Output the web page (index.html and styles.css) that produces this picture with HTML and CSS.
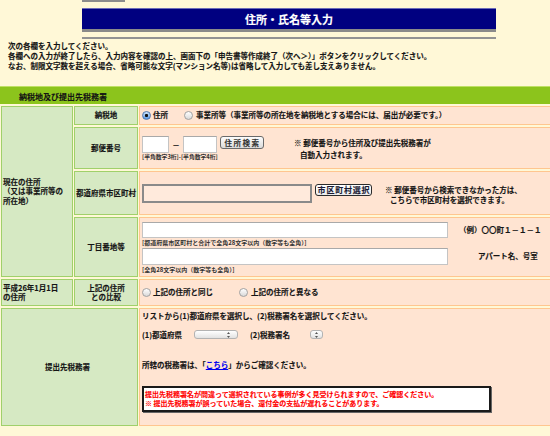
FILE: index.html
```html
<!DOCTYPE html>
<html lang="ja">
<head>
<meta charset="utf-8">
<title>住所・氏名等入力</title>
<link rel="stylesheet" href="styles.css">
</head>
<body>
<div class="toprule"></div>
<div class="titlebox">
  <h1 class="title">住所・氏名等入力</h1>
  <div class="titleline"></div>
</div>
<div class="intro">
  <p>次の各欄を入力してください。</p>
  <p>各欄への入力が終了したら、入力内容を確認の上、画面下の「申告書等作成終了（次へ＞）」ボタンをクリックしてください。</p>
  <p>なお、制限文字数を超える場合、省略可能な文字(マンション名等)は省略して入力しても差し支えありません。</p>
</div>
<div class="sechead">納税地及び提出先税務署</div>
<div class="form">
  <div class="g addr">現在の住所<br>（又は事業所等の<br>所在地）</div>
  <div class="g lbl">納税地</div>
  <div class="p radios">
    <span class="radio on"></span><span class="rl">住所</span>
    <span class="radio r2a"></span><span class="rl rl2">事業所等（事業所等の所在地を納税地とする場合には、届出が必要です。）</span>
  </div>

  <div class="g lbl">郵便番号</div>
  <div class="p zip">
    <div class="zipleft">
      <div class="ziprow">
        <span class="inp z1"></span><span class="dash">－</span><span class="inp z2"></span><span class="btn b1">住所検索</span>
      </div>
      <div class="tiny">[半角数字3桁]-[半角数字4桁]</div>
    </div>
    <div class="note n1">※ 郵便番号から住所及び提出先税務署が<span class="n2">自動入力されます。</span></div>
  </div>

  <div class="g lbl">都道府県市区町村</div>
  <div class="p city">
    <span class="cityin"></span><span class="btn b2">市区町村選択</span>
    <div class="note n3">※ 郵便番号から検索できなかった方は、<span class="n4">こちらで市区町村を選択できます。</span></div>
  </div>

  <div class="g lbl">丁目番地等</div>
  <div class="p street">
    <div class="sline"><span class="inp s1"></span><span class="ex ex1">（例）〇〇町１－１－１</span></div>
    <div class="tiny t2">[都道府県市区町村と合計で全角28文字以内（数字等も全角）]</div>
    <div class="sline l2"><span class="inp s2"></span><span class="ex ex2">アパート名、号室</span></div>
    <div class="tiny t2">[全角28文字以内（数字等も全角）]</div>
  </div>

  <div class="g h26">平成26年1月1日<br>の住所</div>
  <div class="g lbl">上記の住所<br>との比較</div>
  <div class="p radios">
    <span class="radio"></span><span class="rl">上記の住所と同じ</span>
    <span class="radio r2b"></span><span class="rl rl2">上記の住所と異なる</span>
  </div>

  <div class="g office">提出先税務署</div>
  <div class="p sel-cell">
    <p class="l1">リストから(1)都道府県を選択し、(2)税務署名を選択してください。</p>
    <div class="selrow">
      <span class="sl1">(1)都道府県</span>
      <span class="sel s-a"><svg width="3" height="6" viewBox="0 0 3 6"><path d="M1.5 0L3 2H0z M1.5 6L3 4H0z" fill="#555"/></svg></span>
      <span class="sl2">(2)税務署名</span>
      <span class="sel s-b"><svg width="3" height="6" viewBox="0 0 3 6"><path d="M1.5 0L3 2H0z M1.5 6L3 4H0z" fill="#555"/></svg></span>
    </div>
    <p class="l3">所轄の税務署は、「<a class="link" href="#">こちら</a>」からご確認ください。</p>
    <div class="warn">
      <p>提出先税務署名が間違って選択されている事例が多く見受けられますので、ご確認ください。</p>
      <p>※ 提出先税務署が誤っていた場合、還付金の支払が遅れることがあります。</p>
    </div>
  </div>
</div>
</body>
</html>
```
FILE: styles.css
```css
* { box-sizing: border-box; margin: 0; padding: 0; }
html, body { width: 550px; height: 436px; overflow: hidden; }
body {
  background: #FFF8D7;
  font-family: "Noto Sans CJK JP", "Noto Sans", sans-serif;
  font-size: 7.5px;
  font-weight: 700;
  color: #141414;
  line-height: 10px;
  -webkit-text-stroke: 0.12px #141414;
}
.toprule { margin-left: 82px; width: 43px; height: 2px; background: #8c8c8c; }
.titlebox { margin: 6px 0 0 82px; width: 414px; }
.title {
  height: 24px;
  background: #000080;
  border-top: 1px solid #6b6bb8;
  border-bottom: 3px solid #8a8a8a;
  color: #fff;
  -webkit-text-stroke: 0.15px #fff;
  font-size: 11px;
  font-weight: 700;
  line-height: 20px;
  text-align: center;
}
.titleline { margin-top: 5px; height: 2px; background: #939393; }
.intro { margin-top: 2px; padding-left: 8px; line-height: 10.2px; }
.sechead {
  margin-top: 14px;
  height: 18px;
  background: #8CC41C;
  border-top: 1px solid #bfe064;
  padding: 2px 0 0 19px;
  font-size: 8px;
  line-height: 15px;
}
.form {
  margin-top: 2px;
  padding-left: 1px;
  width: 560px;
  display: grid;
  grid-template-columns: 72px 64px 1fr;
  grid-template-rows: 19px 42px 44px 60px 27px 118px;
  gap: 2px 1px;
}
.g { background: #D6E9C3; border: 1px solid #A0D06A; }
.p { background: #FFE4D2; border: 1px solid #FFC68F; padding-left: 2px; }
.addr { grid-row: 1 / 5; display: flex; align-items: center; padding-left: 1px; line-height: 9.5px; }
.lbl { display: flex; align-items: center; justify-content: center; text-align: center; line-height: 9.5px; }
.h26 { display: flex; align-items: center; padding-left: 1px; line-height: 9.5px; }
.office { grid-column: 1 / 3; display: flex; align-items: center; justify-content: center; padding-right: 4px; }

.radios { display: flex; align-items: center; }
.radio {
  flex: none;
  width: 9px; height: 9px;
  border-radius: 50%;
  border: 1px solid #a2a2a2;
  background: linear-gradient(#ffffff, #d9d9d9);
}
.radio.on {
  border-color: #4f78b0;
  background: radial-gradient(circle, #111 0 1.3px, transparent 1.8px), linear-gradient(#cfe3fa, #5b98e4);
}
.rl { margin-left: 2px; }
.r2a { margin-left: 16px; }
.r2b { margin-left: 26px; }
.rl2 { margin-left: 3px; }

.zip { display: flex; padding-top: 8px; }
.zipleft { width: 152px; flex: none; }
.ziprow { display: flex; align-items: flex-start; }
.inp { display: block; flex: none; background: #fff; border: 1px solid #c4c4c4; border-top-color: #a9a9a9; }
.z1 { width: 27px; height: 17px; }
.z2 { width: 34px; height: 17px; }
.dash { width: 14px; text-align: center; line-height: 17px; }
.btn {
  flex: none;
  display: block;
  text-align: center;
  border-radius: 3px;
}
.b1 {
  margin-left: 3px;
  width: 44px; height: 13px;
  border: 1px solid #6a6a6a;
  background: linear-gradient(#fdfdfd, #dadada);
  color: #333;
  -webkit-text-stroke: 0.1px #333;
  letter-spacing: 1.5px;
  line-height: 11px;
  padding-left: 1px;
}
.tiny { font-size: 5.8px; line-height: 8px; color: #333; -webkit-text-stroke: 0; white-space: nowrap; }
.note { line-height: 10px; }
.n1 { margin-top: 2px; }
.n2 { display: block; margin-top: 2px; padding-left: 6px; }

.city { display: flex; align-items: flex-start; padding-top: 12px; }
.cityin { flex: none; width: 170px; height: 19px; border: 2px solid #8a8a8a; background: #FFEADC; }
.b2 {
  margin-left: 3px;
  width: 57px; height: 12px;
  border: 1px solid #2b2b2b;
  background: linear-gradient(#ffffff, #ececec);
  color: #1b1b3a;
  font-size: 8px;
  letter-spacing: .8px;
  line-height: 10px;
  padding-left: 1px;
}
.n3 { margin: 1px 0 0 13px; line-height: 10px; }
.n4 { display: block; padding-left: 5px; }

.street { padding-top: 4px; }
.sline { display: flex; align-items: center; }
.s1 { width: 306px; height: 16px; }
.s2 { width: 306px; height: 17px; }
.t2 { font-size: 6px; margin-top: 1px; }
.l2 { margin-top: 1px; }
.ex1 { margin-left: 11px; }
.ex2 { margin-left: 30px; }

.sel-cell { line-height: 9px; }
.l1 { margin-top: 2px; }
.selrow { display: flex; align-items: center; margin-top: 10px; height: 10px; }
.sl1 { width: 52px; flex: none; }
.sl2 { margin-left: 12px; width: 60px; flex: none; }
.sel {
  flex: none;
  display: flex;
  align-items: center;
  justify-content: flex-end;
  height: 9px;
  border: 1px solid #b3b3b3;
  border-radius: 3px;
  background: linear-gradient(#ffffff, #e2e2e2);
}
.s-a { width: 44px; padding-right: 7px; }
.s-b { width: 13px; padding-right: 4px; }
.sel svg { display: block; }
.l3 { margin-top: 20px; }
.link { color: #0000EE; -webkit-text-stroke: 0.12px #0000EE; text-decoration: underline; }
.warn {
  margin-top: 17px;
  width: 349px;
  height: 26px;
  background: #fff;
  border: 2px solid #1a1a1a;
  box-shadow: 1px 1px 0 #666;
  color: #FF0000;
  -webkit-text-stroke: 0.12px #FF0000;
  font-size: 7px;
  line-height: 9px;
  padding: 2px 0 0 1px;
}
```
